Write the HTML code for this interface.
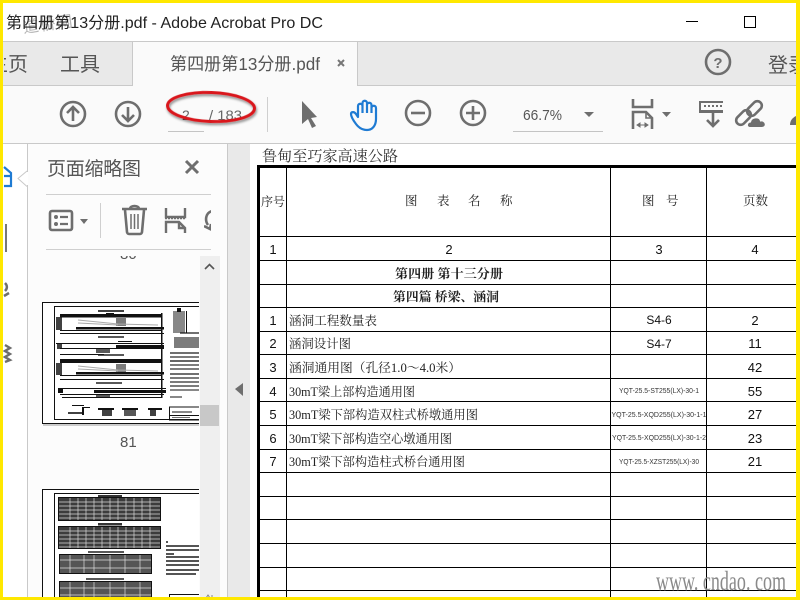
<!DOCTYPE html>
<html><head><meta charset="utf-8"><style>
html,body{margin:0;padding:0;background:#fff;width:800px;height:600px;overflow:hidden}
svg{display:block}
.ui{font-family:"Liberation Sans","Noto Sans CJK SC",sans-serif}
.s{font-family:"Liberation Serif","Noto Serif CJK SC",serif;font-size:12.5px;fill:#222}
.n{font-family:"Liberation Sans",sans-serif;font-size:13px;fill:#111;text-anchor:middle}
.c{font-family:"Liberation Sans",sans-serif;font-size:7px;fill:#333;text-anchor:middle}
.g{fill:none;stroke:#6e6e6e;stroke-width:2.6}
</style></head><body>
<svg width="800" height="600" viewBox="0 0 800 600" xmlns="http://www.w3.org/2000/svg">
<defs>
<clipPath id="thumb"><rect x="28" y="256" width="171" height="341"/></clipPath>
<clipPath id="rail"><rect x="3" y="143" width="24" height="454"/></clipPath>
<clipPath id="tabs"><rect x="4" y="42" width="792" height="100"/></clipPath>
<clipPath id="pic"><rect x="204" y="200" width="7" height="40"/></clipPath>
<filter id="sh" x="-20%" y="-50%" width="140%" height="200%"><feDropShadow dx="1" dy="2" stdDeviation="1.2" flood-color="#000" flood-opacity=".45"/></filter>
</defs>
<rect width="800" height="600" fill="#fff"/>
<!-- tab bar -->
<rect x="0" y="41" width="800" height="1" fill="#c9c9c9"/>
<rect x="0" y="42" width="800" height="43" fill="#e9e9e9"/>
<rect x="0" y="85" width="800" height="1" fill="#c9c9c9"/>
<rect x="0" y="86" width="800" height="57" fill="#fafafa"/>
<rect x="0" y="143" width="800" height="1" fill="#c9c9c9"/>
<rect x="133" y="42" width="224" height="44" fill="#fafafa"/>
<rect x="132" y="42" width="1" height="44" fill="#c9c9c9"/>
<rect x="357" y="42" width="1" height="44" fill="#c9c9c9"/>
<!-- title -->
<text x="22" y="30" transform="rotate(-8 45 20)" class="ui" font-size="16" fill="#b5b5b5" textLength="50">道桥网</text>
<text x="6" y="28" class="ui" font-size="16" fill="#222" textLength="317" lengthAdjust="spacingAndGlyphs">第四册第13分册.pdf - Adobe Acrobat Pro DC</text>
<rect x="686" y="21" width="12" height="1" fill="#000"/>
<rect x="744.500" y="16.500" width="11" height="11" fill="none" stroke="#000"/>
<g clip-path="url(#tabs)" class="ui" fill="#555">
<text x="-12" y="71" font-size="20" textLength="40">主页</text>
<text x="60" y="71" font-size="20" textLength="40">工具</text>
<text x="170" y="70" font-size="17.500" textLength="150" lengthAdjust="spacingAndGlyphs">第四册第13分册.pdf</text>
<text x="768" y="72" font-size="20" textLength="40">登录</text>
</g>
<path d="M338 60l6 6M344 60l-6 6" stroke="#777" stroke-width="2" fill="none"/>
<circle cx="718" cy="62" r="12" class="g"/>
<text x="718" y="68" class="ui" font-size="15" font-weight="bold" fill="#6e6e6e" text-anchor="middle">?</text>
<!-- toolbar -->
<circle cx="73" cy="114" r="12" class="g"/>
<path d="M73 121v-14M67 113l6-6 6 6" class="g"/>
<circle cx="128" cy="114" r="12" class="g"/>
<path d="M128 107v14M122 115l6 6 6-6" class="g"/>
<text x="182" y="120" class="ui" font-size="14" fill="#666">2</text>
<text x="209" y="120" class="ui" font-size="14" fill="#666" textLength="33" lengthAdjust="spacingAndGlyphs">/ 183</text>
<rect x="168" y="131" width="36" height="1" fill="#c4c4c4"/>
<ellipse cx="211" cy="107" rx="43.500" ry="14.500" transform="rotate(2 211 107)" fill="none" stroke="#d9161b" stroke-width="3" filter="url(#sh)"/>
<rect x="267" y="97" width="1" height="35" fill="#cfcfcf"/>
<path d="M302 101l15 16-6 1 5 8-4 2-4-9-6 5z" fill="#6e6e6e"/>
<path d="M356 124c-3-4-5-7-5-10 0-2 3-3 5 0l2 3v-11c0-3 4.500-3 4.500 0v-3c0-3 4.500-3 4.500 0v2c0-3 4.500-3 4.500 0v3c0-3 4.500-3 4.500 0v11c0 7-4 11-9 11-4 0-8-2-11-6zM362.500 104v9M367 103v10M371.500 105v8" fill="none" stroke="#1f7bd3" stroke-width="2.200" stroke-linejoin="round"/>
<circle cx="418" cy="113" r="12" class="g"/>
<path d="M411 113h14" class="g"/>
<circle cx="473" cy="113" r="12" class="g"/>
<path d="M466 113h14M473 106v14" class="g"/>
<text x="523" y="120" class="ui" font-size="15" fill="#555" textLength="39" lengthAdjust="spacingAndGlyphs">66.7%</text>
<path d="M584 112h10l-5 5z" fill="#6e6e6e"/>
<rect x="513" y="131" width="90" height="1" fill="#c4c4c4"/>
<path d="M633 99v8h19v-8M633 129v-17h13l6 6v11" fill="none" stroke="#6e6e6e" stroke-width="2.600"/>
<path d="M646 112v6h6" fill="none" stroke="#6e6e6e" stroke-width="1.600"/>
<path d="M637 125h11M637 125l3-2v4zM648 125l-3-2v4z" fill="#6e6e6e" stroke="#6e6e6e"/>
<path d="M662 112h9l-4.500 5z" fill="#6e6e6e"/>
<path d="M699 101h24v2h-24zM699 103h2v8h-2zM699 110h24v3h-24z" fill="#6e6e6e"/>
<path d="M704 106h2M708 106h2M712 106h2M716 106h2M720 106h2" stroke="#6e6e6e" stroke-width="2"/>
<path d="M713 112v14M707 120l6 6 6-6" class="g"/>
<rect x="735" y="113" width="17" height="9" rx="4.500" transform="rotate(-45 743.500 117.500)" class="g"/>
<rect x="746" y="104" width="17" height="9" rx="4.500" transform="rotate(-45 754.500 108.500)" class="g"/>
<path d="M750 127.500c-3.500 0-3.500-5 .5-5.500 1-5 9-5.500 10-1 5-1 7 6 1.500 6.500z" fill="#6e6e6e" stroke="#fafafa"/>
<path d="M790 125c0-4 2-7 6-9v9z" fill="#6e6e6e"/>
<!-- left rail -->
<rect x="3" y="144" width="24" height="453" fill="#fff"/>
<rect x="27" y="144" width="1" height="453" fill="#c9c9c9"/>
<g clip-path="url(#rail)">
<path d="M4 167l7 6v13H4M4 176h7" fill="none" stroke="#1f7bd3" stroke-width="2.200"/>
<rect x="5" y="224" width="2" height="28" fill="#777"/>
<path d="M5 283c3 3 2 6 0 8M4 296l5-3" fill="none" stroke="#6e6e6e" stroke-width="2.500"/>
<path d="M5 345l5 3-5 3 5 3-5 3 5 3-5 2" fill="none" stroke="#6e6e6e" stroke-width="2.400"/>
</g>
<path d="M27 171l-9 7.500 9 8" fill="#fff" stroke="#c9c9c9"/>
<rect x="27" y="172" width="1" height="13" fill="#fff"/>
<!-- panel -->
<rect x="28" y="144" width="199" height="453" fill="#fcfcfc"/>
<rect x="227" y="144" width="1" height="453" fill="#c9c9c9"/>
<rect x="228" y="144" width="22" height="453" fill="#e9e9e9"/>
<path d="M235 389l8-6v13z" fill="#6e6e6e"/>
<text x="47" y="175" class="ui" font-size="19" fill="#555" textLength="94">页面缩略图</text>
<path d="M186 161l12 12M198 161l-12 12" stroke="#6e6e6e" stroke-width="3" fill="none"/>
<rect x="46" y="194" width="165" height="1" fill="#cfcfcf"/>
<rect x="50" y="211" width="22" height="19" rx="2" class="g"/>
<circle cx="56" cy="217" r="2" fill="#6e6e6e"/><circle cx="56" cy="224" r="2" fill="#6e6e6e"/>
<path d="M60 217h8M60 224h8" stroke="#6e6e6e" stroke-width="2.200"/>
<path d="M80 219h8l-4 5z" fill="#6e6e6e"/>
<rect x="100" y="203" width="1" height="35" fill="#cfcfcf"/>
<path d="M122 209h25M130 209c0-4 9-4 9 0M125 210l2 22c0 1 1 2 2 2h11c1 0 2-1 2-2l2-22" fill="none" stroke="#6e6e6e" stroke-width="2.600"/>
<path d="M131 214v15M134.500 214v15M138 214v15" stroke="#6e6e6e" stroke-width="1.500"/>
<path d="M166 208v9h19v-9M166 233v-11h13l6 6v5M179 222v6h6" fill="none" stroke="#6e6e6e" stroke-width="2.400"/>
<path d="M165 218.500h21" stroke="#6e6e6e" stroke-width="1.500" stroke-dasharray="2 1"/>
<g clip-path="url(#pic)"><path d="M212 211c-7 2-7 10-4 14M204 226l6 3 1-5" fill="none" stroke="#6e6e6e" stroke-width="2.600"/></g>
<rect x="46" y="249" width="165" height="1" fill="#cfcfcf"/>
<!-- scrollbar -->
<rect x="200" y="256" width="20" height="341" fill="#efefef"/>
<path d="M205 269l4.500-4.500 4.500 4.500" fill="none" stroke="#555" stroke-width="1.600"/>
<rect x="200" y="405" width="19" height="21" fill="#c8c8c8"/>
<!-- thumbnails -->
<g clip-path="url(#thumb)">
<text x="120" y="259" class="ui" font-size="15" fill="#555">80</text>
<rect x="42.500" y="302.500" width="170" height="121" fill="#fff" stroke="#111"/>
<path d="M43 425h160" stroke="#bbb" stroke-width="1.500"/>
<rect x="54.500" y="306.500" width="170" height="113" fill="none" stroke="#111"/>
<g fill="#111">
<rect x="60" y="314" width="102" height="3.500"/><rect x="56" y="317" width="6" height="13" opacity=".8"/><rect x="116" y="318" width="10" height="8" opacity=".55"/>
<rect x="76" y="327" width="88" height="2.500"/><rect x="60" y="330" width="102" height="1"/><rect x="60" y="333" width="104" height="1"/>
<rect x="98" y="310" width="26" height="2" opacity=".8"/><rect x="106" y="313" width="8" height="1"/>
<rect x="98" y="336" width="26" height="2" opacity=".7"/>
<rect x="118" y="341" width="14" height="1"/><rect x="56" y="343" width="108" height="1"/>
<rect x="57" y="344" width="5" height="5" opacity=".8"/><rect x="116" y="345" width="48" height="3.500"/><rect x="60" y="348" width="104" height="1"/>
<rect x="96" y="349" width="14" height="4" opacity=".7"/>
<rect x="60" y="354" width="44" height="1"/>
<rect x="98" y="354" width="26" height="2" opacity=".7"/>
<rect x="60" y="359" width="102" height="4"/><rect x="56" y="363" width="6" height="12" opacity=".8"/><rect x="116" y="364" width="10" height="8" opacity=".55"/>
<rect x="76" y="372" width="88" height="2.500"/><rect x="60" y="375" width="102" height="1"/><rect x="60" y="379" width="104" height="1"/>
<rect x="96" y="382" width="26" height="2" opacity=".7"/>
<rect x="58" y="388" width="108" height="1"/><rect x="58" y="389" width="5" height="4"/><rect x="94" y="390" width="72" height="3"/>
<rect x="60" y="394" width="104" height="1"/><rect x="96" y="394" width="14" height="4" opacity=".7"/><rect x="62" y="397" width="100" height="1"/>
<rect x="161" y="313" width="1.500" height="85"/>
<rect x="173" y="311" width="12" height="22" opacity=".5"/><rect x="177" y="308" width="4" height="4"/><rect x="186" y="311" width="1" height="22"/>
<rect x="180" y="332" width="20" height="2" opacity=".6"/>
<rect x="174" y="337" width="26" height="11" opacity=".55"/>
<rect x="170" y="352" width="30" height="2" opacity=".6"/><rect x="170" y="356" width="30" height="2" opacity=".55"/><rect x="170" y="360" width="30" height="2" opacity=".65"/><rect x="170" y="364" width="30" height="2" opacity=".55"/><rect x="170" y="368" width="30" height="2" opacity=".55"/><rect x="170" y="373" width="30" height="2" opacity=".6"/><rect x="170" y="377" width="30" height="2" opacity=".55"/><rect x="170" y="381" width="30" height="2" opacity=".55"/><rect x="170" y="385" width="30" height="2" opacity=".55"/><rect x="170" y="389" width="30" height="2" opacity=".5"/><rect x="170" y="396" width="12" height="2" opacity=".5"/>
<rect x="72" y="405" width="12" height="1"/><rect x="68" y="412" width="14" height="2" opacity=".8"/><rect x="82" y="407" width="8" height="1"/><rect x="82" y="407" width="2" height="8"/>
<rect x="98" y="408" width="16" height="2"/><rect x="102" y="408" width="10" height="8" opacity=".8"/><rect x="122" y="408" width="16" height="2"/><rect x="124" y="408" width="12" height="8" opacity=".7"/><rect x="148" y="408" width="14" height="2"/><rect x="150" y="408" width="6" height="8" opacity=".8"/>
<rect x="169.500" y="407" width="40" height="13" fill="none" stroke="#111"/><rect x="172" y="411" width="20" height="2" opacity=".5"/><rect x="172" y="417" width="18" height="1" opacity=".6"/><rect x="169" y="415" width="30" height="1"/>
</g>
<path d="M78 320l40 4 40 1M78 323l40 2M78 366l40 4 40 1M78 369l40 2" stroke="#aaa" fill="none"/>
<text x="120" y="447" class="ui" font-size="15" fill="#555">81</text>
<rect x="42.500" y="489.500" width="170" height="130" fill="#fff" stroke="#111"/>
<rect x="54.500" y="493.500" width="170" height="130" fill="none" stroke="#111"/>
<g fill="#111">
<rect x="98" y="495" width="24" height="2.500" opacity=".85"/>
<rect x="98" y="523" width="24" height="2.500" opacity=".85"/>
<rect x="88" y="551" width="36" height="2" opacity=".7"/>
<rect x="86" y="578" width="38" height="2" opacity=".7"/>
</g>
<g fill="none" stroke="#111">
<rect x="58.500" y="497.500" width="102" height="23" fill="#3c3c3c"/>
<rect x="58.500" y="526.500" width="102" height="22" fill="#3c3c3c"/>
<rect x="59.500" y="554.500" width="92" height="19" fill="#555"/>
<rect x="59.500" y="581.500" width="92" height="20" fill="#555"/>
</g>
<g stroke="#fff" stroke-width=".7" opacity=".8">
<path d="M59 502h101M59 506h101M59 510h101M59 514h101M59 518h101M59 531h101M59 535h101M59 539h101M59 543h101M59 547h101"/>
<path d="M70 498v22M78 498v22M86 498v22M94 498v22M102 498v22M110 498v22M118 498v22M126 498v22M134 498v22M142 498v22M150 498v22M70 527v21M78 527v21M86 527v21M94 527v21M102 527v21M110 527v21M118 527v21M126 527v21M134 527v21M142 527v21M150 527v21"/>
<path d="M60 560h91M60 568h91M60 588h91M60 595h91M70 555v18M84 555v18M94 555v18M110 555v18M125 555v18M140 555v18M70 582v19M84 582v19M94 582v19M110 582v19M125 582v19M140 582v19"/>
</g>
<g fill="#555">
<rect x="166" y="541" width="2" height="2"/><rect x="166" y="545" width="33" height="2"/><rect x="166" y="549" width="33" height="2"/><rect x="166" y="553" width="8" height="2"/><rect x="166" y="556" width="33" height="2"/><rect x="166" y="560" width="33" height="2"/><rect x="166" y="564" width="33" height="2"/><rect x="166" y="569" width="33" height="2"/><rect x="166" y="573" width="30" height="2"/>
</g>
<rect x="169.500" y="594.500" width="40" height="10" fill="none" stroke="#111"/>
</g>
<path d="M206 598l2-3 2 3M212 598v-3" stroke="#888" fill="none"/>
<!-- document -->
<rect x="250" y="144" width="550" height="456" fill="#fff"/>
<text x="262" y="161" font-family="Liberation Serif,Noto Serif CJK SC,serif" font-size="15" fill="#333" textLength="136" lengthAdjust="spacingAndGlyphs">鲁甸至巧家高速公路</text>
<g fill="#000">
<rect x="257" y="165" width="540" height="3"/>
<rect x="257" y="165" width="3" height="435"/>
<rect x="286" y="166" width="1" height="434"/>
<rect x="610" y="166" width="1" height="434"/>
<rect x="706" y="166" width="1" height="434"/>
<rect x="258" y="236" width="539" height="1"/>
<rect x="258" y="260" width="539" height="1"/>
<rect x="258" y="284" width="539" height="1"/>
<rect x="258" y="307" width="539" height="1"/>
<rect x="258" y="331" width="539" height="1"/>
<rect x="258" y="354" width="539" height="1"/>
<rect x="258" y="378" width="539" height="1"/>
<rect x="258" y="401" width="539" height="1"/>
<rect x="258" y="425" width="539" height="1"/>
<rect x="258" y="449" width="539" height="1"/>
<rect x="258" y="472" width="539" height="1"/>
<rect x="258" y="496" width="539" height="1"/>
<rect x="258" y="519" width="539" height="1"/>
<rect x="258" y="543" width="539" height="1"/>
<rect x="258" y="567" width="539" height="1"/>
<rect x="258" y="590" width="539" height="1"/>
</g>
<text x="261" y="206" class="s" textLength="24" lengthAdjust="spacingAndGlyphs">序号</text>
<text x="405" y="205" class="s">图</text><text x="437" y="205" class="s">表</text><text x="468" y="205" class="s">名</text><text x="500" y="205" class="s">称</text>
<text x="642" y="205" class="s">图</text><text x="666" y="205" class="s">号</text>
<text x="743" y="205" class="s" textLength="25" lengthAdjust="spacingAndGlyphs">页数</text>
<text x="273" y="254" class="n">1</text><text x="449" y="254" class="n">2</text><text x="659" y="254" class="n">3</text><text x="755" y="254" class="n">4</text>
<text x="395" y="278" class="s" font-weight="bold" textLength="108" lengthAdjust="spacingAndGlyphs">第四册 第十三分册</text>
<text x="393" y="301" class="s" font-weight="bold" textLength="106" lengthAdjust="spacingAndGlyphs">第四篇 桥梁、涵洞</text>
<text x="273" y="325" class="n">1</text><text x="273" y="348" class="n">2</text><text x="273" y="372" class="n">3</text><text x="273" y="396" class="n">4</text><text x="273" y="419" class="n">5</text><text x="273" y="443" class="n">6</text><text x="273" y="466" class="n">7</text>
<text x="289" y="325" class="s" textLength="88" lengthAdjust="spacingAndGlyphs">涵洞工程数量表</text>
<text x="289" y="348" class="s" textLength="62" lengthAdjust="spacingAndGlyphs">涵洞设计图</text>
<text x="289" y="372" class="s" textLength="172" lengthAdjust="spacingAndGlyphs">涵洞通用图（孔径1.0～4.0米）</text>
<text x="289" y="396" class="s" textLength="126" lengthAdjust="spacingAndGlyphs">30mT梁上部构造通用图</text>
<text x="289" y="419" class="s" textLength="189" lengthAdjust="spacingAndGlyphs">30mT梁下部构造双柱式桥墩通用图</text>
<text x="289" y="443" class="s" textLength="163" lengthAdjust="spacingAndGlyphs">30mT梁下部构造空心墩通用图</text>
<text x="289" y="466" class="s" textLength="176" lengthAdjust="spacingAndGlyphs">30mT梁下部构造柱式桥台通用图</text>
<text x="659" y="324" class="n" style="font-size:12px">S4-6</text>
<text x="659" y="348" class="n" style="font-size:12px">S4-7</text>
<text x="659" y="393" class="c" textLength="80" lengthAdjust="spacingAndGlyphs">YQT-25.5-ST255(LX)-30-1</text>
<text x="659" y="417" class="c" textLength="95" lengthAdjust="spacingAndGlyphs">YQT-25.5-XQD255(LX)-30-1-1</text>
<text x="659" y="440" class="c" textLength="94" lengthAdjust="spacingAndGlyphs">YQT-25.5-XQD255(LX)-30-1-2</text>
<text x="659" y="464" class="c" textLength="80" lengthAdjust="spacingAndGlyphs">YQT-25.5-XZST255(LX)-30</text>
<text x="755" y="325" class="n">2</text><text x="755" y="348" class="n">11</text><text x="755" y="372" class="n">42</text><text x="755" y="396" class="n">55</text><text x="755" y="419" class="n">27</text><text x="755" y="443" class="n">23</text><text x="755" y="466" class="n">21</text>
<text x="656" y="590" font-family="Liberation Serif,serif" font-size="27" fill="#8a8a8a" textLength="130" lengthAdjust="spacingAndGlyphs">www. cndao. com</text>
<!-- yellow frame -->
<rect x="0" y="0" width="800" height="3" fill="#ffe800"/>
<rect x="0" y="0" width="3" height="600" fill="#ffe800"/>
<rect x="796" y="0" width="4" height="600" fill="#ffe800"/>
<rect x="0" y="597" width="800" height="3" fill="#ffe800"/>
</svg>
</body></html>
